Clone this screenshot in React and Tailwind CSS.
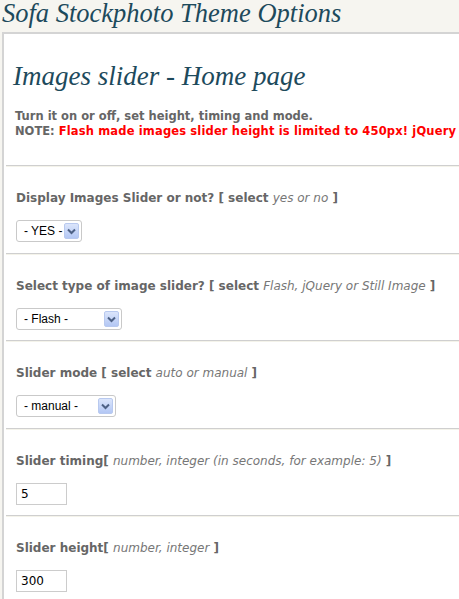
import React from "react";

const sans = { fontFamily: '"DejaVu Sans", Verdana, sans-serif' };

function Select({ label, width }) {
  return (
    <div
      className={`relative h-[22px] rounded-[3px] border border-[#c9c9c9] bg-white ${width}`}
    >
      <span
        className="absolute left-[7px] top-[3px] text-[12px] leading-[15px] text-black"
        style={{ fontFamily: '"Liberation Sans", Arial, sans-serif' }}
      >
        {label}
      </span>
      <div className="absolute right-[2px] top-[2px] flex h-[16px] w-[15px] items-center justify-center rounded-[2px] border border-[#b8c9ef] bg-gradient-to-b from-[#dbe5fb] to-[#b3c7f4]">
        <svg width="9" height="7" viewBox="0 0 9 7">
          <path d="M1 1.5 L4.5 5 L8 1.5" fill="none" stroke="#4d6185" strokeWidth="2" />
        </svg>
      </div>
    </div>
  );
}

function Input({ value }) {
  return (
    <div className="flex h-[22px] w-[51px] items-center border border-[#cccccc] bg-white pl-[4px] text-[12px] text-black" style={sans}>
      {value}
    </div>
  );
}

function Sep() {
  return (
    <div className="ml-[1px]">
      <div className="h-px bg-[#cfcfcf]" />
      <div className="h-px bg-[#f4f3ea]" />
    </div>
  );
}

function Label({ children }) {
  return (
    <div className="whitespace-nowrap text-[12px] font-bold leading-[15px] text-[#666666]" style={sans}>
      {children}
    </div>
  );
}

function Em({ children }) {
  return <span className="font-normal italic text-[#777777]">{children}</span>;
}

function Section({ label, children, pb }) {
  return (
    <div className={`pl-[11px] pt-[24px] ${pb}`}>
      <Label>{label}</Label>
      <div className="mt-[14px]">{children}</div>
    </div>
  );
}

export default function App() {
  return (
    <div className="h-[599px] w-[459px] overflow-hidden bg-[#f6f5f0]">
      <div
        className="h-[32px] whitespace-nowrap pl-[2px] text-[26.5px] italic leading-[26px] text-[#1d4a5c]"
        style={{ fontFamily: '"Liberation Serif", Georgia, serif' }}
      >
        Sofa Stockphoto Theme Options
      </div>
      <div className="ml-[2px] w-[600px] border-l-2 border-t-2 border-[#d4d4d4] bg-white pl-[1px]">
        <div className="pl-[8px] pt-[27px] pb-[26px]">
          <div
            className="whitespace-nowrap text-[27px] italic leading-[30px] text-[#1d4a5c]"
            style={{ fontFamily: '"Liberation Serif", Georgia, serif' }}
          >
            Images slider - Home page
          </div>
          <div className="mt-[18px] whitespace-nowrap text-[11.5px] font-bold leading-[15px] text-[#666666]" style={sans}>
            <div className="pl-[2px]">Turn it on or off, set height, timing and mode.</div>
            <div className="pl-[2px]">
              NOTE: <span className="tracking-[0.15px] text-[#ff0000]">Flash made images slider height is limited to 450px! jQuery slider height is unlimited.</span>
            </div>
          </div>
        </div>
        <Sep />
        <Section pb="pb-[11px]" label={<>Display Images Slider or not? [ select <Em>yes or no</Em> ]</>}>
          <Select label="- YES -" width="w-[66px]" />
        </Section>
        <Sep />
        <Section pb="pb-[10px]" label={<>Select type of image slider? [ select <Em>Flash, jQuery or Still Image</Em> ]</>}>
          <Select label="- Flash -" width="w-[106px]" />
        </Section>
        <Sep />
        <Section pb="pb-[11px]" label={<>Slider mode [ select <Em>auto or manual</Em> ]</>}>
          <Select label="- manual -" width="w-[100px]" />
        </Section>
        <Sep />
        <Section pb="pb-[10px]" label={<>Slider timing[ <Em>number, integer (in seconds, for example: 5)</Em> ]</>}>
          <Input value="5" />
        </Section>
        <Sep />
        <Section pb="pb-[10px]" label={<>Slider height[ <Em>number, integer</Em> ]</>}>
          <Input value="300" />
        </Section>
      </div>
    </div>
  );
}
